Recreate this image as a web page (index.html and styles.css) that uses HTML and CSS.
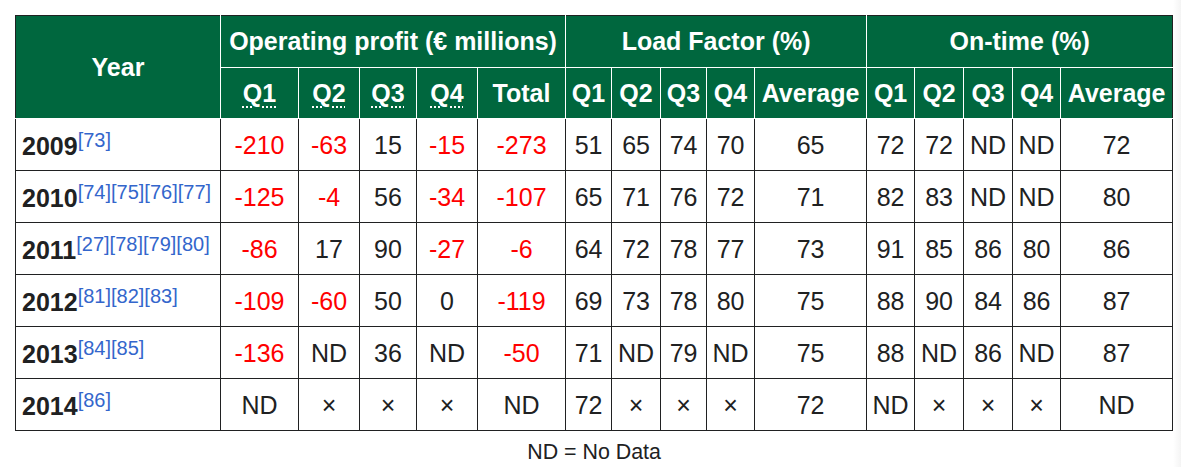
FILE: index.html
```html
<!DOCTYPE html>
<html lang="en">
<head>
<meta charset="utf-8">
<title>Operating results</title>
<link rel="stylesheet" href="styles.css">
</head>
<body>
<table class="results">
  <caption>ND = No Data</caption>
  <colgroup>
    <col class="c-year">
    <col class="c-op1"><col class="c-op2"><col class="c-op3"><col class="c-op4"><col class="c-total">
    <col class="c-lf1"><col class="c-lf2"><col class="c-lf3"><col class="c-lf4"><col class="c-avg">
    <col class="c-ot1"><col class="c-ot2"><col class="c-ot3"><col class="c-ot4"><col class="c-avg2">
  </colgroup>
  <thead>
    <tr class="head-top">
      <th rowspan="2" class="first">Year</th>
      <th colspan="5">Operating profit (€ millions)</th>
      <th colspan="5">Load Factor (%)</th>
      <th colspan="5" class="last">On-time (%)</th>
    </tr>
    <tr class="head-sub">
      <th><abbr title="Quarter 1">Q1</abbr></th>
      <th><abbr title="Quarter 2">Q2</abbr></th>
      <th><abbr title="Quarter 3">Q3</abbr></th>
      <th><abbr title="Quarter 4">Q4</abbr></th>
      <th>Total</th>
      <th>Q1</th><th>Q2</th><th>Q3</th><th>Q4</th><th>Average</th>
      <th>Q1</th><th>Q2</th><th>Q3</th><th>Q4</th><th class="last">Average</th>
    </tr>
  </thead>
  <tbody>
    <tr>
      <td class="year">2009<sup>[73]</sup></td>
      <td class="neg">-210</td><td class="neg">-63</td><td>15</td><td class="neg">-15</td><td class="neg">-273</td>
      <td>51</td><td>65</td><td>74</td><td>70</td><td>65</td>
      <td>72</td><td>72</td><td>ND</td><td>ND</td><td>72</td>
    </tr>
    <tr>
      <td class="year">2010<sup>[74]</sup><sup>[75]</sup><sup>[76]</sup><sup>[77]</sup></td>
      <td class="neg">-125</td><td class="neg">-4</td><td>56</td><td class="neg">-34</td><td class="neg">-107</td>
      <td>65</td><td>71</td><td>76</td><td>72</td><td>71</td>
      <td>82</td><td>83</td><td>ND</td><td>ND</td><td>80</td>
    </tr>
    <tr>
      <td class="year">2011<sup>[27]</sup><sup>[78]</sup><sup>[79]</sup><sup>[80]</sup></td>
      <td class="neg">-86</td><td>17</td><td>90</td><td class="neg">-27</td><td class="neg">-6</td>
      <td>64</td><td>72</td><td>78</td><td>77</td><td>73</td>
      <td>91</td><td>85</td><td>86</td><td>80</td><td>86</td>
    </tr>
    <tr>
      <td class="year">2012<sup>[81]</sup><sup>[82]</sup><sup>[83]</sup></td>
      <td class="neg">-109</td><td class="neg">-60</td><td>50</td><td>0</td><td class="neg">-119</td>
      <td>69</td><td>73</td><td>78</td><td>80</td><td>75</td>
      <td>88</td><td>90</td><td>84</td><td>86</td><td>87</td>
    </tr>
    <tr>
      <td class="year">2013<sup>[84]</sup><sup>[85]</sup></td>
      <td class="neg">-136</td><td>ND</td><td>36</td><td>ND</td><td class="neg">-50</td>
      <td>71</td><td>ND</td><td>79</td><td>ND</td><td>75</td>
      <td>88</td><td>ND</td><td>86</td><td>ND</td><td>87</td>
    </tr>
    <tr>
      <td class="year">2014<sup>[86]</sup></td>
      <td>ND</td><td>×</td><td>×</td><td>×</td><td>ND</td>
      <td>72</td><td>×</td><td>×</td><td>×</td><td>72</td>
      <td>ND</td><td>×</td><td>×</td><td>×</td><td>ND</td>
    </tr>
  </tbody>
</table>
</body>
</html>
```

FILE: styles.css
```css
html, body {
  margin: 0;
  padding: 0;
}

body {
  background: linear-gradient(to right, #ffffff 1173px, #f4f4f4 1181px);
  min-height: 467px;
  padding: 15px 0 0 15px;
  box-sizing: border-box;
  font-family: "Liberation Sans", Arial, sans-serif;
  color: #202122;
}

.results {
  border-collapse: collapse;
  table-layout: fixed;
  width: 1158px;
  font-size: 25px;
  background: #ffffff;
  border: 1px solid #202122;
}

.results caption {
  caption-side: bottom;
  font-size: 21.4px;
  line-height: 24px;
  padding-top: 9px;
  text-align: center;
  color: #202122;
}

.c-year { width: 205px; }
.c-op1 { width: 78px; }
.c-op2 { width: 61px; }
.c-op3 { width: 57px; }
.c-op4 { width: 61px; }
.c-total { width: 88px; }
.c-lf1 { width: 46px; }
.c-lf2 { width: 49px; }
.c-lf3 { width: 46px; }
.c-lf4 { width: 48px; }
.c-avg { width: 112px; }
.c-ot1 { width: 48px; }
.c-ot2 { width: 49px; }
.c-ot3 { width: 49px; }
.c-ot4 { width: 48px; }
.c-avg2 { width: 112px; }

.results th,
.results td {
  padding: 0;
  white-space: nowrap;
  text-align: center;
  vertical-align: middle;
  overflow: hidden;
}

.results th {
  background: #00673e;
  color: #ffffff;
  font-weight: bold;
  border: 1px solid #ffffff;
}

.head-top th {
  border-top-color: #202122;
}

.results th.first {
  border-left-color: #202122;
}

.results th.last {
  border-right-color: #202122;
}

.head-top {
  height: 52px;
}

.head-sub {
  height: 51px;
}

.results abbr {
  text-decoration: underline dotted;
  text-decoration-thickness: 2px;
  text-underline-offset: 5px;
}

.results td {
  border: 1px solid #202122;
  height: 51px;
  line-height: 28px;
}

.results td.year {
  text-align: left;
  padding-left: 6px;
  font-weight: bold;
}

.results td.neg {
  color: #ff0000;
}

.results sup {
  font-size: 20px;
  font-weight: normal;
  color: #3366cc;
  vertical-align: 8px;
  line-height: 1;
}
```
